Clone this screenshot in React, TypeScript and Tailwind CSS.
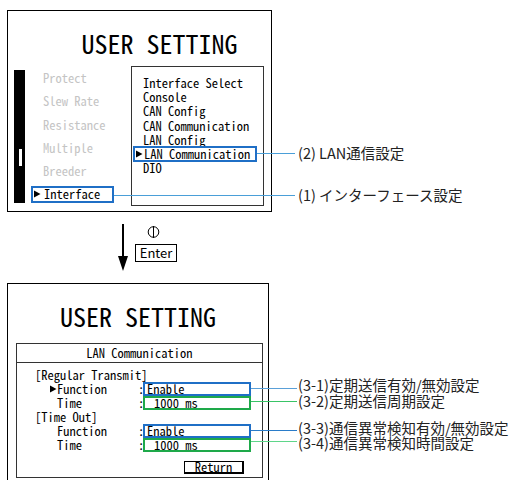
import React from "react";

const MONO = "font-['Noto_Sans_Mono_CJK_JP','DejaVu_Sans_Mono',monospace]";
const JP = "font-['Noto_Sans_CJK_JP','Noto_Sans',sans-serif]";

const leftMenu = ["Protect", "Slew Rate", "Resistance", "Multiple", "Breeder"];
const subMenu = ["Interface Select", "Console", "CAN Config", "CAN Communication", "LAN Config"];

function Pointer() {
  return (
    <svg width="7" height="8" viewBox="0 0 7 8" className="shrink-0">
      <path d="M0 0.5 L6.5 4 L0 7.5 Z" fill="#000" />
    </svg>
  );
}

function SettingRow({ label, value, pointer, box }: { label: string; value: string; pointer?: boolean; box: string }) {
  return (
    <div className="flex h-[14px] items-center">
      <div className="flex w-[103px] items-center pl-[15px]">
        <div className="w-[7px]">{pointer && <Pointer />}</div>
        <span>{label}</span>
      </div>
      <span className="w-[5px] text-center">:</span>
      <div className={"flex h-[14px] w-[108px] items-center border-2 " + box}>{value}</div>
    </div>
  );
}

export default function App() {
  return (
    <div className={"relative h-[480px] w-[515px] overflow-hidden bg-white text-black " + MONO}>
      {/* top screen */}
      <div className="ml-[7px] mt-[10px] flex h-[202px] w-[265px] flex-col border border-black">
        <div className="flex justify-center pl-[40px] pt-[19px] text-[26px] leading-[26px]">USER SETTING</div>
        <div className="mt-[10px] flex h-[140px] text-[12.5px]">
          <div className="relative ml-[6px] mt-[4px] h-[133px] w-[11px] bg-black">
            <div className="absolute left-[5px] top-[79px] h-[17px] w-[3px] bg-white" />
          </div>
          <div className="ml-[6px] flex w-[100px] flex-col pt-[1px]">
            {leftMenu.map((m) => (
              <div key={m} className="flex h-[23.4px] items-center pl-[12px] text-[#c4c4c4]">
                {m}
              </div>
            ))}
            <div className="flex h-[23.4px] items-center">
              <div className="flex h-[17px] w-[83px] items-center gap-[3px] border-2 border-[#1f6fc6] pl-[1px]">
                <Pointer />
                <span>Interface</span>
              </div>
            </div>
          </div>
          <div className="flex h-[140px] w-[133px] flex-col border border-[#333] pt-[9px] leading-[14.2px]">
            {subMenu.map((m) => (
              <div key={m} className="pl-[11px]">{m}</div>
            ))}
            <div className="-my-px ml-px flex h-[16.2px] w-[124px] items-center gap-[1px] border-2 border-[#1f6fc6] pl-[1px]">
              <Pointer />
              <span>LAN Communication</span>
            </div>
            <div className="pl-[11px]">DIO</div>
          </div>
        </div>
      </div>

      {/* enter step */}
      <div className="flex h-[71px]">
        <svg width="12" height="48" viewBox="0 0 12 48" className="ml-[117px] mt-[12px]">
          <line x1="6" y1="0" x2="6" y2="34" stroke="#000" strokeWidth="2" />
          <path d="M1 32 L11 32 L6 47 Z" fill="#000" />
        </svg>
        <div className="ml-[6px] mt-[13px] flex flex-col">
          <svg width="13" height="14" viewBox="0 0 13 14" className="ml-[12px]">
            <circle cx="6.5" cy="7" r="5.3" fill="none" stroke="#000" strokeWidth="1" />
            <line x1="6.5" y1="1" x2="6.5" y2="13" stroke="#000" strokeWidth="1" />
          </svg>
          <div className={"mt-[5px] flex h-[18px] w-[42px] items-center justify-center border border-black text-[13px] " + JP}>
            Enter
          </div>
        </div>
      </div>

      {/* bottom screen */}
      <div className="ml-[7px] flex h-[200px] w-[262px] flex-col border border-black">
        <div className="flex justify-center pt-[19px] text-[26px] leading-[26px]">USER SETTING</div>
        <div className="ml-[8px] mt-[14px] flex h-[135px] w-[247px] flex-col border border-[#333] text-[12.5px] leading-[14px]">
          <div className="flex h-[19px] items-center justify-center border-b border-[#333]">LAN Communication</div>
          <div className="flex flex-col pl-[18px] pt-[5px]">
            <div className="h-[14px]">[Regular Transmit]</div>
            <SettingRow label="Function" value="Enable" pointer box="border-[#1f6fc6] pl-[2px]" />
            <SettingRow label="Time" value="1000 ms" box="border-[#1ea94a] pl-[9px]" />
            <div className="h-[14px]">[Time Out]</div>
            <SettingRow label="Function" value="Enable" box="border-[#1f6fc6] pl-[2px]" />
            <SettingRow label="Time" value="1000 ms" box="border-[#1ea94a] pl-[9px]" />
            <div className="ml-[149px] mt-[9px] flex h-[13px] w-[60px] items-center justify-center border border-b-2 border-r-2 border-black">
              Return
            </div>
          </div>
        </div>
      </div>

      {/* callouts */}
      <div className="absolute left-[257px] top-[153px] h-px w-[38px] bg-[#4a9fd8]" />
      <div className="absolute left-[114px] top-[195px] h-px w-[181px] bg-[#4a9fd8]" />
      <div className={"absolute left-[298px] top-[144px] text-[14.5px] leading-[18px] text-[#222] " + JP}>(2) LAN通信設定</div>
      <div className={"absolute left-[298px] top-[186px] text-[14.5px] leading-[18px] text-[#222] " + JP}>(1) インターフェース設定</div>

      <div className="absolute left-[251px] top-[388px] h-px w-[46px] bg-[#5aa0d8]" />
      <div className="absolute left-[251px] top-[401px] h-px w-[46px] bg-[#39c466]" />
      <div className="absolute left-[251px] top-[430px] h-px w-[46px] bg-[#2a7cc9]" />
      <div className="absolute left-[251px] top-[441px] h-px w-[46px] bg-[#5fd68a]" />
      <div className={"absolute left-[298px] top-[377px] flex flex-col text-[14.5px] leading-[16px] text-[#222] " + JP}>
        <span>(3-1)定期送信有効/無効設定</span>
        <span>(3-2)定期送信周期設定</span>
      </div>
      <div className={"absolute left-[298px] top-[420px] flex flex-col text-[14.5px] leading-[15px] text-[#222] " + JP}>
        <span>(3-3)通信異常検知有効/無効設定</span>
        <span>(3-4)通信異常検知時間設定</span>
      </div>
    </div>
  );
}
